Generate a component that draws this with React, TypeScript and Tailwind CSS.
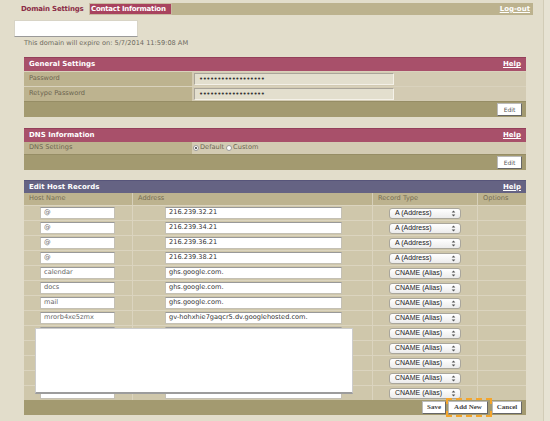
import React from 'react';

const font = "font-['DejaVu_Sans',Verdana,sans-serif]";

const hostRows = [
  { host: '@', addr: '216.239.32.21', type: 'A (Address)' },
  { host: '@', addr: '216.239.34.21', type: 'A (Address)' },
  { host: '@', addr: '216.239.36.21', type: 'A (Address)' },
  { host: '@', addr: '216.239.38.21', type: 'A (Address)' },
  { host: 'calendar', addr: 'ghs.google.com.', type: 'CNAME (Alias)' },
  { host: 'docs', addr: 'ghs.google.com.', type: 'CNAME (Alias)' },
  { host: 'mail', addr: 'ghs.google.com.', type: 'CNAME (Alias)' },
  { host: 'mrorb4xe5zmx', addr: 'gv-hohxhie7gaqcr5.dv.googlehosted.com.', type: 'CNAME (Alias)' },
  { host: '', addr: '', type: 'CNAME (Alias)' },
  { host: '', addr: '', type: 'CNAME (Alias)' },
  { host: '', addr: '', type: 'CNAME (Alias)' },
  { host: '', addr: '', type: 'CNAME (Alias)' },
  { host: '', addr: '', type: 'CNAME (Alias)' },
];

const SectionHeader: React.FC<{ title: string; purple?: boolean }> = ({ title, purple }) => (
  <div
    className={`flex items-center justify-between px-[5px] text-white font-bold text-[7px] ${
      purple ? 'bg-[#656383] border-t border-[#57557a] h-[13px]' : 'bg-[#a8506a] border-t border-[#93405a] h-[14px]'
    }`}
  >
    <span>{title}</span>
    <span className="underline">Help</span>
  </div>
);

const EditButton = () => (
  <div className="h-[13px] w-[25px] bg-white border border-[#bbb] border-r-[#666] border-b-[#666] flex items-center justify-center text-[6px] text-[#555]">
    Edit
  </div>
);

const Arrows = () => (
  <svg width="5" height="7" viewBox="0 0 5 7">
    <path d="M2.5 0.5 L4.3 2.6 L0.7 2.6 Z" fill="#555" />
    <path d="M2.5 6.5 L4.3 4.4 L0.7 4.4 Z" fill="#555" />
  </svg>
);

export default function App() {
  return (
    <div className={`w-[550px] h-[421px] bg-[#e7e3d4] overflow-hidden ${font}`}>
      <div className="relative w-[544px] h-[421px] bg-[#e2ddcb] border-r border-[#d2ccb7] pt-[3px]">
        {/* nav */}
        <div className="ml-[17px] w-[516px] h-[12px] flex items-stretch text-[7px] font-bold whitespace-nowrap">
          <div className="w-[72px] flex items-center pl-[4px] text-[#8c2c47] tracking-[-0.2px]">Domain Settings</div>
          <div className="w-[83px] bg-[#a8435e] text-white flex items-center pl-[1px] border border-[#c9b9a0] text-[7px] tracking-[-0.25px] overflow-hidden">
            Contact Information
          </div>
          <div className="flex-1 bg-[#bcb28e] flex items-center justify-end pr-[3px] text-white">
            <span className="underline">Log-out</span>
          </div>
        </div>

        <div className="ml-[14px] mt-[5px] w-[124px] h-[17px] bg-white border border-[#d8d4c6] border-b-[#9a9a9a]" />
        <div className="ml-[24px] mt-[2px] text-[6.6px] text-[#6d6a60] leading-[9px]">
          This domain will expire on: 5/7/2014 11:59:08 AM
        </div>

        {/* General Settings */}
        <div className="ml-[24px] w-[502px] mt-[9px]">
          <SectionHeader title="General Settings" />
          {['Password', 'Retype Password'].map((l) => (
            <div key={l} className="flex h-[15px] border-t border-[#d9d2bd]">
              <div className="w-[168px] bg-[#bdb38f] text-[#6c6550] text-[6.6px] pl-[5px] flex items-center">{l}</div>
              <div className="flex-1 bg-[#d3cbb3] flex items-center pl-[2px]">
                <div className="w-[200px] h-[12px] bg-[#e3dfce] border border-[#f4f1e8] border-l-[#aaa59a] border-t-[#aaa59a] flex items-center pl-[4px] text-[7px] tracking-[-0.5px] text-[#333] leading-none">
                  ••••••••••••••••••
                </div>
              </div>
            </div>
          ))}
          <div className="h-[16px] bg-[#a39a70] flex items-center justify-end pr-[4px] border-t border-[#968d65]">
            <EditButton />
          </div>
        </div>

        {/* DNS Information */}
        <div className="ml-[24px] w-[502px] mt-[11px]">
          <SectionHeader title="DNS Information" />
          <div className="flex h-[12px]">
            <div className="w-[168px] bg-[#bdb38f] text-[#6c6550] text-[6.6px] pl-[5px] flex items-center">DNS Settings</div>
            <div className="flex-1 bg-[#d3cbb3] flex items-center pl-[1px] text-[6.6px] text-[#6c6550] gap-[1px]">
              <span className="w-[6px] h-[6px] rounded-full bg-white border border-[#999] flex items-center justify-center">
                <span className="w-[2px] h-[2px] rounded-full bg-[#333]" />
              </span>
              <span>Default</span>
              <span className="ml-[1px] w-[6px] h-[6px] rounded-full bg-white border border-[#999]" />
              <span>Custom</span>
            </div>
          </div>
          <div className="h-[16px] bg-[#a39a70] flex items-center justify-end pr-[4px] border-t border-[#968d65]">
            <EditButton />
          </div>
        </div>

        {/* Edit Host Records */}
        <div className="ml-[24px] w-[502px] mt-[10px]">
          <SectionHeader title="Edit Host Records" purple />
          <div className="grid grid-cols-[109px_240px_105px_48px] h-[12px] bg-[#bdb38f] text-[6.6px] text-[#746c52]">
            <div className="pl-[5px] flex items-center border-r border-[#d6cfb9]">Host Name</div>
            <div className="pl-[5px] flex items-center border-r border-[#d6cfb9]">Address</div>
            <div className="pl-[5px] flex items-center border-r border-[#d6cfb9]">Record Type</div>
            <div className="pl-[5px] flex items-center">Options</div>
          </div>
          {hostRows.map((r, i) => (
            <div
              key={i}
              className="grid grid-cols-[109px_240px_105px_48px] h-[15px] bg-[#cfc7ab] border-t border-[#dbd4bf] text-[6.6px]"
            >
              <div className="flex items-center pl-[16px] border-r border-[#dbd4bf]">
                <div className="w-[75px] h-[12px] bg-white border border-[#c4c0b4] border-t-[#999] flex items-center pl-[3px] text-[#666]">
                  {r.host}
                </div>
              </div>
              <div className="flex items-center pl-[32px] border-r border-[#dbd4bf]">
                <div className="w-[177px] h-[12px] bg-white border border-[#c4c0b4] border-t-[#999] flex items-center pl-[3px] text-[#333] whitespace-nowrap overflow-hidden">
                  {r.addr}
                </div>
              </div>
              <div className="flex items-center pl-[16px] border-r border-[#dbd4bf]">
                <div className="w-[72px] h-[11px] rounded-[3px] bg-gradient-to-b from-white to-[#ececec] border border-[#a9a69c] flex items-center justify-between pl-[5px] pr-[4px] text-[#222] font-['Liberation_Sans',Arial,sans-serif] text-[7px]">
                  <span>{r.type}</span>
                  <Arrows />
                </div>
              </div>
              <div />
            </div>
          ))}
          <div className="h-[15px] bg-[#a39a70] flex items-center justify-end pr-[4px] gap-[2px] font-['Liberation_Serif','Times_New_Roman',serif] font-bold text-[7px] text-[#444]">
            <div className="h-[13px] w-[24px] bg-white border border-[#bbb] border-r-[#666] border-b-[#666] flex items-center justify-center">
              Save
            </div>
            <div className="relative h-[13px] w-[40px] bg-white border border-[#bbb] border-r-[#666] border-b-[#666] flex items-center justify-center">
              Add New
              <div className="absolute -left-[3px] -right-[5px] -top-[4px] -bottom-[4px] border-[2px] border-dashed border-[#f4a52c]" />
            </div>
            <div className="ml-[2px] h-[13px] w-[30px] bg-white border border-[#bbb] border-r-[#666] border-b-[#666] flex items-center justify-center">
              Cancel
            </div>
          </div>
        </div>

        {/* autocomplete overlay */}
        <div className="absolute left-[35px] top-[328px] w-[318px] h-[66px] bg-white border border-[#ccc] border-b-[2px] border-b-[#9c9c9c]" />
      </div>
    </div>
  );
}
